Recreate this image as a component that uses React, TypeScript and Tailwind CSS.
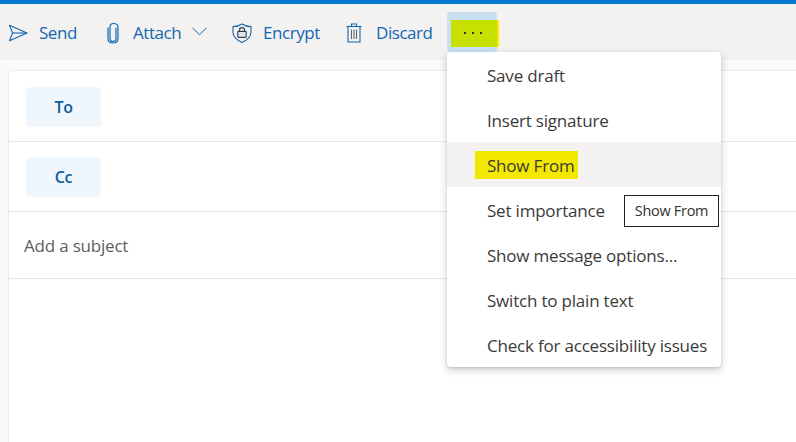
const font = "[font-family:'Open_Sans','Noto_Sans',sans-serif]";
const menuItems = [
  'Save draft',
  'Insert signature',
  'Show From',
  'Set importance',
  'Show message options...',
  'Switch to plain text',
  'Check for accessibility issues',
];

function SendIcon() {
  return (
    <svg width="20" height="18" viewBox="0 0 20 18" fill="none" stroke="#1267b0" strokeWidth="1.1" strokeLinejoin="round">
      <path d="M1.5 1.2 L19 9 L1.5 16.8 L4.6 9 Z" />
      <path d="M4.6 9 H19" />
    </svg>
  );
}

function ClipIcon() {
  return (
    <svg width="14" height="22" viewBox="0 0 14 22" fill="none" stroke="#1267b0" strokeWidth="1.2" strokeLinecap="round">
      <path d="M10 6 V16.5 C10 18.5 9 19.5 7 19.5 C5 19.5 4 18.5 4 16.5 V5 C4 3 5 1.5 7.5 1.5 C10.5 1.5 12 3 12 5.5 V16.5 C12 19.5 10 21 7 21 C4 21 2 19.5 2 16.5 V6" />
    </svg>
  );
}

function ShieldIcon() {
  return (
    <svg width="20" height="20" viewBox="0 0 20 20" fill="none" stroke="#1267b0" strokeWidth="1.1" strokeLinejoin="round">
      <path d="M10 1 C12.5 2.8 15.5 3.6 19 3.6 V9 C19 13.8 15.5 17 10 19.4 C4.5 17 1 13.8 1 9 V3.6 C4.5 3.6 7.5 2.8 10 1 Z" stroke="#1267b0" />
      <rect x="5.8" y="8.4" width="8.4" height="6" rx="0.8" fill="#dfe6ee" stroke="#333f4d" />
      <path d="M7.5 8.4 V6.8 C7.5 5.3 8.6 4.6 10 4.6 C11.4 4.6 12.5 5.3 12.5 6.8 V8.4" stroke="#333f4d" />
    </svg>
  );
}

function TrashIcon() {
  return (
    <svg width="16" height="20" viewBox="0 0 16 20" fill="none" stroke="#1267b0" strokeWidth="1.1">
      <path d="M0.5 3.5 H15.5" />
      <path d="M5.5 3.5 V1 H10.5 V3.5" />
      <path d="M2 3.5 V19 H14 V3.5" />
      <path d="M5.5 6.5 V16 M8 6.5 V16 M10.5 6.5 V16" stroke="#5c6670" />
    </svg>
  );
}

function ToolbarItem({ icon, label, className }: { icon: React.ReactNode; label: string; className: string }) {
  return (
    <div className={`flex items-center ${className}`}>
      {icon}
      <span className="text-[17px] tracking-[-0.45px] text-[#1267b0]">{label}</span>
    </div>
  );
}

function RecipientRow({ label, height, top }: { label: string; height: string; top: string }) {
  return (
    <div className={`border-b border-[#e8e7e6] pl-[17px] ${height} ${top}`}>
      <button
        type="button"
        className="flex h-10 w-[75px] items-center justify-center rounded-sm bg-[#eff6fc] text-[16px] font-semibold tracking-[-0.3px] text-[#0f5c9e]"
      >
        {label}
      </button>
    </div>
  );
}

export default function App() {
  return (
    <div className={`relative h-[442px] w-[796px] overflow-hidden bg-white ${font}`}>
      <div className="h-1 bg-[#0078d4]" />
      <div className="flex h-14 items-start bg-[#f3f2f1] pl-2">
        <ToolbarItem className="mt-[20px] h-[18px] w-[98px]" icon={<span className="mr-[11px] flex"><SendIcon /></span>} label="Send" />
        <ToolbarItem className="mt-[17px] h-[24px] w-[126px]" icon={<span className="mr-[13px] flex"><ClipIcon /></span>} label="Attach" />
        <ToolbarItem className="mt-[18px] h-[22px] w-[114px]" icon={<span className="mr-[11px] flex"><ShieldIcon /></span>} label="Encrypt" />
        <ToolbarItem className="mt-[18px] h-[22px] w-[101px]" icon={<span className="mr-[14px] flex"><TrashIcon /></span>} label="Discard" />
        <div className="relative mt-2 h-10 w-[50px] rounded-sm bg-[#c7e0f4]">
          <span className="absolute left-1 top-2 h-[27px] w-12 bg-[#f5ea00]" />
          <span className="absolute left-1 top-2 h-[27px] w-[46px] bg-[#c8e000]" />
          <span className="absolute left-[17px] top-[20px] flex gap-[6px]">
            <span className="h-[2px] w-[2px] bg-[#333]" />
            <span className="h-[2px] w-[2px] bg-[#333]" />
            <span className="h-[2px] w-[2px] bg-[#333]" />
          </span>
        </div>
      </div>
      <div className="h-[10px] bg-[#faf9f8]" />
      <div className="flex h-[372px]">
        <div className="w-2 bg-[#faf9f8]" />
        <div className="flex-1 rounded-tl-sm border-t border-l border-[#edebe9] bg-white">
          <RecipientRow label="To" height="h-[71px]" top="pt-4" />
          <RecipientRow label="Cc" height="h-[70px]" top="pt-[15px]" />
          <div className="flex h-[67px] items-center border-b border-[#e8e7e6] pl-[15px] pt-[2px] text-[17px] tracking-[-0.2px] text-[#605e5c]">
            Add a subject
          </div>
        </div>
      </div>

      <div className="absolute left-[447px] top-[52px] w-[274px] rounded-sm bg-white shadow-[0_3px_8px_rgba(0,0,0,0.2),0_1px_2px_rgba(0,0,0,0.12)]">
        {menuItems.map((item) => (
          <div
            key={item}
            className={`flex h-[45px] items-center pl-10 pt-[2px] text-[17px] tracking-[-0.2px] text-[#3b3a39] ${item === 'Show From' ? 'bg-[#f3f2f1]' : ''}`}
          >
            {item === 'Show From' ? (
              <span className="-ml-3 -mt-[2px] flex h-7 items-center bg-[#f3e800] pl-3 pr-1 pt-[2px]">{item}</span>
            ) : (
              item
            )}
          </div>
        ))}
      </div>
      <div className="absolute left-[624px] top-[195px] flex h-8 w-[95px] items-center justify-center border border-[#222] bg-white text-[14.5px] tracking-[-0.3px] text-[#323130]">
        Show From
      </div>
      <svg className="absolute left-[192px] top-[27px]" width="15" height="9" viewBox="0 0 15 9" fill="none" stroke="#1267b0" strokeWidth="1">
        <path d="M0.5 0.8 L7.5 7.8 L14.5 0.8" />
      </svg>
    </div>
  );
}
